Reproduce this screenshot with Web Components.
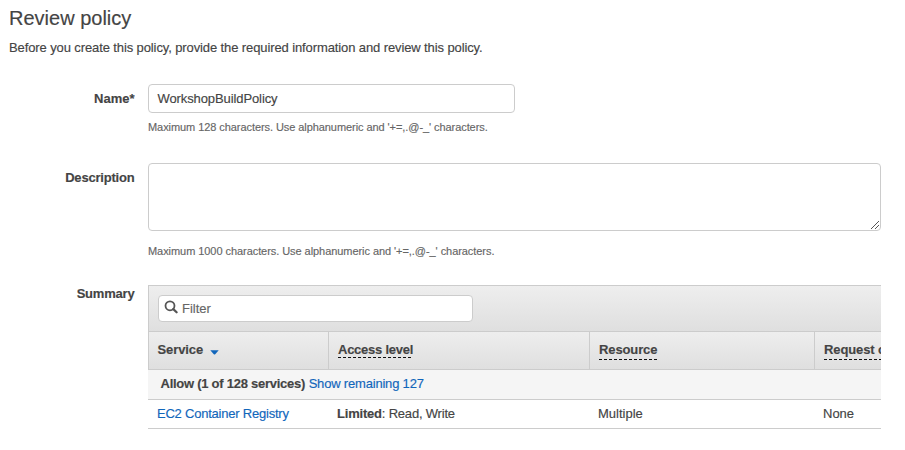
<!DOCTYPE html>
<html lang="en">
<head>
<meta charset="utf-8">
<title>Review policy</title>
<style>
html,body{margin:0;background:#fff;overflow:hidden}
body{font:13px/16px "Liberation Sans",Arial,sans-serif;color:#444;height:450px}
</style>
</head>
<body>
<policy-review></policy-review>
<script>
const define = (name, html) => customElements.define(name, class extends HTMLElement {
  constructor() {
    super();
    this.attachShadow({ mode: 'open' }).innerHTML = html;
  }
});

/* A run of text with its own tracking, taken from the "track" attribute. */
customElements.define('text-run', class extends HTMLElement {
  constructor() {
    super();
    this.attachShadow({ mode: 'open' }).innerHTML =
      '<style>:host{display:inline-block;white-space:pre;-webkit-text-stroke:.15px currentColor}</style><slot></slot>';
  }
  connectedCallback() {
    const t = this.getAttribute('track');
    if (t) this.style.letterSpacing = t + 'px';
  }
});

/* Label at the left, control and hint at the right. */
define('form-row', `<style>
:host{display:grid;grid-template-columns:134.5px 733px;column-gap:13.5px}
.label{font-weight:bold;text-align:right;padding-top:var(--label-top,7px)}
.hint{font-size:11px;line-height:14px;color:#666;margin-top:var(--hint-gap,7px)}
</style><div class="label"><slot name="label"></slot></div>
<div><slot></slot><div class="hint"><slot name="hint"></slot></div></div>`);

define('text-box', `<style>
:host{display:flex;align-items:center;box-sizing:border-box;width:367px;height:29px;border:1px solid #ccc;border-radius:4px;background:#fff;padding-left:8.5px}
</style><slot></slot>`);

define('text-area', `<style>
:host{display:flex;align-items:flex-end;justify-content:flex-end;box-sizing:border-box;width:733px;height:68px;border:1px solid #ccc;border-radius:4px;background:#fff;padding:0 1px 1px 0}
svg{display:block}
</style><svg width="8" height="8" viewBox="0 0 8 8" shape-rendering="crispEdges" fill="#555">
<path d="M0 7h1v1H0zM1 6h1v1H1zM2 5h1v1H2zM3 4h1v1H3zM4 3h1v1H4zM5 2h1v1H5zM6 1h1v1H6zM7 0h1v1H7zM4 7h1v1H4zM5 6h1v1H5zM6 5h1v1H6zM7 4h1v1H7z"/></svg>`);

define('filter-box', `<style>
:host{display:flex;box-sizing:border-box;width:315px;height:27px;border:1px solid #ccc;border-radius:4px;background:#fff;padding:4px 0 0 5px;color:#666}
svg{display:block;margin-right:4px}
div{padding-top:1px}
</style><svg width="14" height="14" viewBox="0 0 14 14" fill="none" stroke="#555"><circle cx="6" cy="5.8" r="4.5" stroke-width="1.8"/><path d="M9.3 9.1 12.6 12.3" stroke-width="2.2" stroke-linecap="round"/></svg><div><slot></slot></div>`);

define('head-cell', `<style>
:host{display:block;box-sizing:border-box;padding:10px 0 0 9px;border-left:1px solid #ccc;font-weight:bold;white-space:nowrap}
:host([sorted]){padding-left:8.5px}
:host([sorted]) svg{display:inline-block}
svg{display:none;margin-left:7px;vertical-align:-1px}
:host([tip]) span{display:inline-block;height:var(--rule,18px);background:repeating-linear-gradient(90deg,#111 0 3px,transparent 3px 5px) 0 100%/100% 1px no-repeat}
</style><span><slot></slot></span><svg width="9" height="5" viewBox="0 0 9 5"><path d="M.3.2h8.4L5.2 4.2Q4.5 4.9 3.8 4.2z" fill="#1166bb"/></svg>`);

define('summary-table', `<style>
:host{display:block;width:733px;overflow:hidden;border-top:1px solid #ccc}
.bar{box-sizing:border-box;height:45px;padding:9px 0 0 9px;border-left:1px solid #ccc;background:linear-gradient(#eee,#dfdfdf)}
.cols{display:grid;grid-template-columns:180px 261px 225px 180px}
.head{height:37px;border:solid #ccc;border-width:1px 0;background:linear-gradient(#eee,#dfdfdf)}
.group{height:29px;box-sizing:border-box;padding:6px 0 0 12.5px;background:#f5f5f5}
.row{height:28px;border:solid #ccc;border-width:1px 0}
</style><div class="bar"><slot name="filter"></slot></div>
<div class="cols head"><slot name="head"></slot></div>
<div class="group"><slot name="group"></slot></div>
<div class="cols row"><slot name="row"></slot></div>`);

define('row-cell', `<style>:host{display:block;box-sizing:border-box;padding:6px 0 0 9px;white-space:nowrap}</style><slot></slot>`);
define('blue-link', `<style>:host{color:#1166bb;cursor:pointer}</style><slot></slot>`);

define('policy-review', `<style>
:host{display:flow-root;height:450px;width:905px;overflow:hidden}
h1{font-size:20px;line-height:24px;font-weight:normal;margin:6px 0 0 9px}
p{margin:10px 0 0 9px}
.name{margin-top:28px}
.desc{margin-top:29px;--hint-gap:13px}
.sum{margin-top:27px;--label-top:1px}
.access{--rule:16px}
b{font-weight:bold}
</style>
<h1><text-run>Review policy</text-run></h1>
<p><text-run track="-.108">Before you create this policy, provide the required information and review this policy.</text-run></p>
<form-row class="name"><text-run slot="label">Name*</text-run><text-box><text-run track="-.1">WorkshopBuildPolicy</text-run></text-box><text-run slot="hint" track="-.07">Maximum 128 characters. Use alphanumeric and '+=,.@-_' characters.</text-run></form-row>
<form-row class="desc"><text-run slot="label" track="-.2">Description</text-run><text-area></text-area><text-run slot="hint" track="-.06">Maximum 1000 characters. Use alphanumeric and '+=,.@-_' characters.</text-run></form-row>
<form-row class="sum"><text-run slot="label" track="-.2">Summary</text-run>
<summary-table>
<filter-box slot="filter"><text-run>Filter</text-run></filter-box>
<head-cell slot="head" sorted><text-run track="-.1">Service</text-run></head-cell>
<head-cell slot="head" tip class="access"><text-run track="-.25">Access level</text-run></head-cell>
<head-cell slot="head" tip><text-run track="-.12">Resource</text-run></head-cell>
<head-cell slot="head" tip><text-run track="-.12">Request condition</text-run></head-cell>
<div slot="group"><b><text-run track="-.26">Allow (1 of 128 services)</text-run></b> <blue-link><text-run track="-.19">Show remaining 127</text-run></blue-link></div>
<row-cell slot="row"><blue-link><text-run track="-.22">EC2 Container Registry</text-run></blue-link></row-cell>
<row-cell slot="row"><text-run track="-.2"><b>Limited</b>: Read, Write</text-run></row-cell>
<row-cell slot="row"><text-run>Multiple</text-run></row-cell>
<row-cell slot="row"><text-run>None</text-run></row-cell>
</summary-table></form-row>`);
</script>
</body>
</html>
